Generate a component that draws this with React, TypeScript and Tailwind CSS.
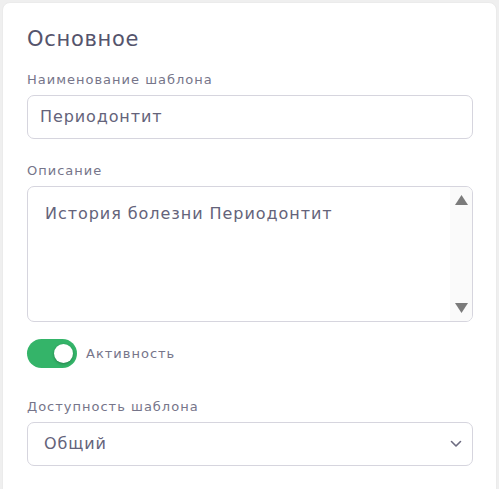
import React from 'react';

const font = { fontFamily: '"DejaVu Sans", "Noto Sans", sans-serif' };

function Field({ label, children }: { label: string; children: React.ReactNode }) {
  return (
    <div className="flex flex-col">
      <label className="text-[13px] leading-4 text-[#76758a] tracking-[1px] mb-[7px]">{label}</label>
      {children}
    </div>
  );
}

export default function App() {
  return (
    <div className="min-h-screen bg-[#efefef] pl-[2px] pr-[2px] pt-[2px]" style={font}>
      <div className="bg-white rounded-t-[8px] min-h-[500px] px-6 pt-[24px] border border-[#ebebeb]">
        <h2 className="text-[21px] leading-6 text-[#55546c] tracking-[0.7px] mb-[21px]">Основное</h2>

        <Field label="Наименование шаблона">
          <div className="h-[44px] w-[446px] rounded-[7px] border border-[#d6d5de] flex items-center px-3 text-[16px] text-[#64637a] tracking-[0.9px]">
            Периодонтит
          </div>
        </Field>

        <div className="mt-[24px]">
          <Field label="Описание">
            <div className="h-[136px] w-[446px] rounded-[7px] border border-[#d6d5de] flex overflow-hidden">
              <div className="flex-1 pl-[17px] pt-[15px] text-[16px] text-[#64637a] tracking-[0.95px]">
                История болезни Периодонтит
              </div>
              <div className="w-[22px] bg-[#fafafa] flex flex-col items-center justify-between py-[8px]">
                <svg width="13" height="10" viewBox="0 0 13 10"><path d="M6.5 0L13 10H0Z" fill="#7b7b7b" /></svg>
                <svg width="13" height="10" viewBox="0 0 13 10"><path d="M0 0H13L6.5 10Z" fill="#7b7b7b" /></svg>
              </div>
            </div>
          </Field>
        </div>

        <div className="mt-[17px] flex items-center gap-[9px]">
          <div className="relative w-[50px] h-[29px] rounded-full bg-[#34b469]">
            <div className="absolute right-[4px] top-[5px] w-[19px] h-[19px] rounded-full bg-white shadow-[0_1px_3px_rgba(0,0,0,0.3)]" />
          </div>
          <span className="text-[13px] text-[#76758a] tracking-[1px]">Активность</span>
        </div>

        <div className="mt-[31px]">
          <Field label="Доступность шаблона">
            <div className="h-[44px] w-[446px] rounded-[7px] border border-[#d6d5de] flex items-center justify-between pl-4 pr-[10px] text-[16px] text-[#64637a] tracking-[0.9px]">
              <span>Общий</span>
              <svg width="12" height="8" viewBox="0 0 12 8" fill="none">
                <path d="M1.5 1.5L6 6L10.5 1.5" stroke="#6c6b80" strokeWidth="1.6" strokeLinecap="round" strokeLinejoin="round" />
              </svg>
            </div>
          </Field>
        </div>
      </div>
    </div>
  );
}
